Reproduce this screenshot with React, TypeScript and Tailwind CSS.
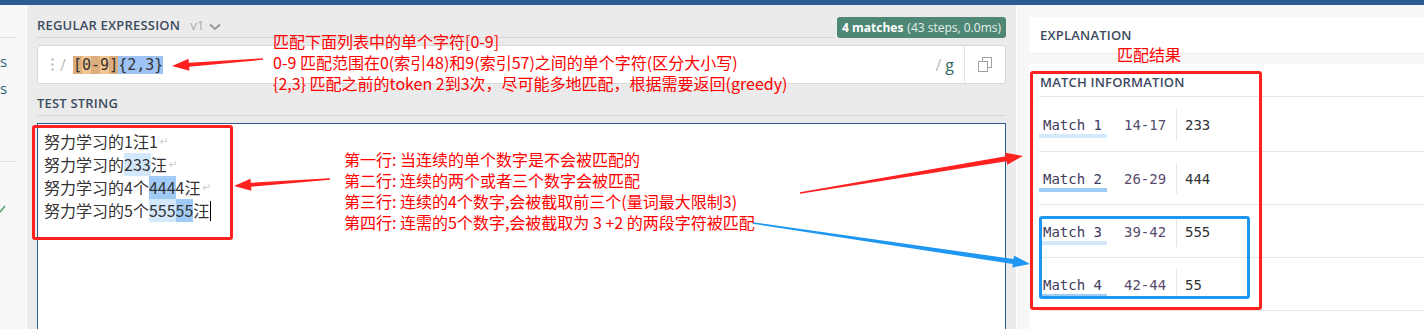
import React from 'react';

type Pt = [number, number];

// tapered arrow: thin tail, thicker shaft near the head, filled triangle tip
function arrowPoints(from: Pt, to: Pt, t0: number, t1: number, hl: number, hw: number) {
  const [x1, y1] = from;
  const [x2, y2] = to;
  const L = Math.hypot(x2 - x1, y2 - y1);
  const ux = (x2 - x1) / L;
  const uy = (y2 - y1) / L;
  const nx = -uy;
  const ny = ux;
  const bx = x2 - ux * hl;
  const by = y2 - uy * hl;
  const pts: Pt[] = [
    [x1 + (nx * t0) / 2, y1 + (ny * t0) / 2],
    [bx + (nx * t1) / 2, by + (ny * t1) / 2],
    [bx + (nx * hw) / 2, by + (ny * hw) / 2],
    [x2, y2],
    [bx - (nx * hw) / 2, by - (ny * hw) / 2],
    [bx - (nx * t1) / 2, by - (ny * t1) / 2],
    [x1 - (nx * t0) / 2, y1 - (ny * t0) / 2],
  ];
  return pts.map((p) => p.join(',')).join(' ');
}

const matches = [
  { n: 1, range: '14-17', value: '233', bar: 'bg-[#d4e8fc]', h: 'h-[55px]' },
  { n: 2, range: '26-29', value: '444', bar: 'bg-[#9fcbf6]', h: 'h-[53px]' },
  { n: 3, range: '39-42', value: '555', bar: 'bg-[#d4e8fc]', h: 'h-[53px]' },
  { n: 4, range: '42-44', value: '55', bar: 'bg-[#9fcbf6]', h: 'h-[53px]' },
];

function Ret() {
  return <span className="ml-[2px] font-['DejaVu_Sans',sans-serif] text-[11px] text-[#cfcfcf]">↵</span>;
}

export default function App() {
  return (
    <div className="relative flex h-[329px] w-[1424px] flex-col overflow-hidden bg-[#ebebeb] font-['Open_Sans',sans-serif]">
      {/* top bar */}
      <div className="h-[5px] shrink-0 bg-[#2d5a92]" />

      <div className="flex flex-1">
        {/* sidebar (scrolled, only edges visible) */}
        <div className="w-[27px] shrink-0 border-r border-white bg-[#f7f7f7]">
          <div className="mt-[32px] h-px w-[16px] bg-[#dedede]" />
          <div className="mt-[13px] text-[15px] leading-[20px] text-[#2b6477]">s</div>
          <div className="mt-[7px] text-[15px] leading-[20px] text-[#2b6477]">s</div>
          <div className="mt-[63px] h-px w-[16px] bg-[#dedede]" />
          <svg className="mt-[43px]" width="6" height="8" viewBox="0 0 6 8">
            <path d="M0 7 L5 1" stroke="#3c9a5f" strokeWidth="1.3" fill="none" />
          </svg>
        </div>

        {/* main column */}
        <div className="w-[989px] shrink-0 px-[10px]">
          <div className="mt-[12px] flex h-[21px]">
            <div className="mr-[3px] flex flex-1 items-center border-b border-[#d6d6d6] pb-[3px]">
              <span className="text-[13px] font-semibold tracking-[0.2px] text-[#3d4b5f]">REGULAR EXPRESSION</span>
              <span className="ml-[10px] text-[13px] text-[#ababab]">v1</span>
              <svg className="ml-[5px] mt-[2px]" width="12" height="8" viewBox="0 0 12 8">
                <path d="M1 1.5 L6 6 L11 1.5" stroke="#9a9a9a" strokeWidth="2" fill="none" />
              </svg>
            </div>
            <div className="flex h-[21px] items-center rounded-[3px] bg-[#4e8775] px-[5px] text-[12px] text-white">
              <span className="font-bold">4 matches</span>
              <span className="ml-[4px] text-[#e6f0ec]">(43 steps, 0.0ms)</span>
            </div>
          </div>

          {/* regex input */}
          <div className="mt-[7px] flex h-[39px] items-center rounded-[3px] border border-[#d9d9d9] bg-white">
            <svg className="ml-[13px]" width="3" height="13" viewBox="0 0 3 13">
              <circle cx="1.5" cy="1.5" r="1.2" fill="#bdbdbd" />
              <circle cx="1.5" cy="6.5" r="1.2" fill="#bdbdbd" />
              <circle cx="1.5" cy="11.5" r="1.2" fill="#bdbdbd" />
            </svg>
            <span className="ml-[6px] w-[13px] text-[16px] text-[#bbbbbb]">/</span>
            <div className="flex font-['DejaVu_Sans_Mono',monospace] text-[15px] leading-[18px] text-[#333]">
              <span className="bg-[#dcad7d]">[</span>
              <span className="bg-[#f2c691]">0</span>
              <span className="bg-[#dcad7d]">-</span>
              <span className="bg-[#f2c691]">9</span>
              <span className="bg-[#dcad7d]">]</span>
              <span className="bg-[#9fc3f5]">{'{2,3}'}</span>
            </div>
            <div className="flex-1" />
            <span className="text-[16px] text-[#bbbbbb]">/</span>
            <span className="ml-[4px] mr-[10px] text-[16px] text-[#356b63]">g</span>
            <div className="flex h-full w-[41px] items-center justify-center border-l border-[#e2e2e2]">
              <svg width="14" height="15" viewBox="0 0 14 15">
                <rect x="4.5" y="0.5" width="9" height="10" fill="white" stroke="#a0a0a0" />
                <rect x="0.5" y="4.5" width="9" height="10" fill="white" stroke="#a0a0a0" />
              </svg>
            </div>
          </div>

          <div className="mt-[11px] flex h-[21px] items-center border-b border-[#d6d6d6] pb-[3px]">
            <span className="text-[13px] font-semibold tracking-[0.2px] text-[#3d4b5f]">TEST STRING</span>
          </div>

          {/* test string */}
          <div className="mt-[7px] h-[220px] border border-[#2d5a92] bg-white px-[6px] pt-[6px] font-['Noto_Sans_CJK_SC',sans-serif] text-[16px] leading-[23px] text-[#333]">
            <div className="flex items-center">
              努力学习的1汪1<Ret />
            </div>
            <div className="flex items-center">
              努力学习的<span className="bg-[#d4e8fc]">233</span>汪<Ret />
            </div>
            <div className="flex items-center">
              努力学习的4个<span className="bg-[#9fcbf6]">444</span>4汪<Ret />
            </div>
            <div className="flex items-center">
              努力学习的5个<span className="bg-[#d4e8fc]">555</span>
              <span className="bg-[#9fcbf6]">55</span>汪
              <span className="ml-[1px] h-[20px] w-px bg-black" />
            </div>
          </div>
        </div>

        {/* right panel */}
        <div className="flex-1 border-l border-white bg-[#f7f7f7] pl-[12px]">
          <div className="mt-[12px] flex h-[36px] items-center rounded-[2px] bg-white pl-[11px] pt-[2px] shadow-[0_1px_1px_rgba(0,0,0,0.04)]">
            <span className="text-[13px] font-semibold tracking-[0.2px] text-[#3d4b5f]">EXPLANATION</span>
          </div>
          <div className="mt-[11px] h-[300px] rounded-[2px] bg-white pl-[10px]">
            <div className="flex h-[33px] items-center border-b border-[#e6e6e6] pl-[1px] pt-[6px]">
              <span className="text-[13px] font-semibold tracking-[0.2px] text-[#3d4b5f]">MATCH INFORMATION</span>
            </div>
            {matches.map((m) => (
              <div
                key={m.n}
                className={`flex items-center border-b border-[#e6e6e6] font-['DejaVu_Sans_Mono',monospace] text-[14px] ${m.h}`}
              >
                <div className="mt-[6px] flex w-[68px] flex-col">
                  <span className="pl-[4px] leading-[18px] text-[#413a5c]">Match {m.n}</span>
                  <span className={`h-[4px] w-full ${m.bar}`} />
                </div>
                <span className="mt-[2px] w-[69px] pl-[17px] text-[#584a6c]">{m.range}</span>
                <div className="flex h-[31px] items-center border-l border-[#e6e6e6] pl-[8px] pt-[2px] text-[#333]">
                  {m.value}
                </div>
              </div>
            ))}
          </div>
        </div>
      </div>

      {/* annotations drawn over the screenshot */}
      <div className="pointer-events-none absolute left-[273px] top-[31px] font-['Noto_Sans_CJK_SC',sans-serif] text-[16px] leading-[21px] text-[#ff0000]">
        <div>匹配下面列表中的单个字符[0-9]</div>
        <div>0-9 匹配范围在0(索引48)和9(索引57)之间的单个字符(区分大小写)</div>
        <div>{'{2,3}'} 匹配之前的token 2到3次，尽可能多地匹配，根据需要返回(greedy)</div>
      </div>
      <div className="pointer-events-none absolute left-[344px] top-[149px] font-['Noto_Sans_CJK_SC',sans-serif] text-[16px] leading-[21px] text-[#ff0000]">
        <div>第一行: 当连续的单个数字是不会被匹配的</div>
        <div>第二行: 连续的两个或者三个数字会被匹配</div>
        <div>第三行: 连续的4个数字,会被截取前三个(量词最大限制3)</div>
        <div>第四行: 连需的5个数字,会被截取为 3 +2 的两段字符被匹配</div>
      </div>
      <div className="pointer-events-none absolute left-[1117px] top-[44px] font-['Noto_Sans_CJK_SC',sans-serif] text-[16px] leading-[21px] text-[#ff0000]">
        匹配结果
      </div>

      <div className="pointer-events-none absolute left-[32px] top-[125px] h-[115px] w-[201px] rounded-[3px] border-[3px] border-[#ff2020]" />
      <div className="pointer-events-none absolute left-[1030px] top-[71px] h-[239px] w-[232px] rounded-[3px] border-[3px] border-[#ff2020]" />
      <div className="pointer-events-none absolute left-[1039px] top-[216px] h-[83px] w-[211px] rounded-[3px] border-[3px] border-[#1d97f2]" />

      <svg className="pointer-events-none absolute left-0 top-0" width="1424" height="329">
        <polygon points={arrowPoints([263, 59], [172, 66], 1.5, 4, 17, 12)} fill="#ff2020" />
        <polygon points={arrowPoints([330, 179], [234, 186], 1.5, 4, 17, 12)} fill="#ff2020" />
        <polygon points={arrowPoints([800, 193], [1023, 156], 1.5, 5, 17, 12)} fill="#ff2020" />
        <polygon points={arrowPoints([753, 223], [1030, 264], 1.5, 5, 17, 12)} fill="#1d97f2" />
      </svg>
    </div>
  );
}
